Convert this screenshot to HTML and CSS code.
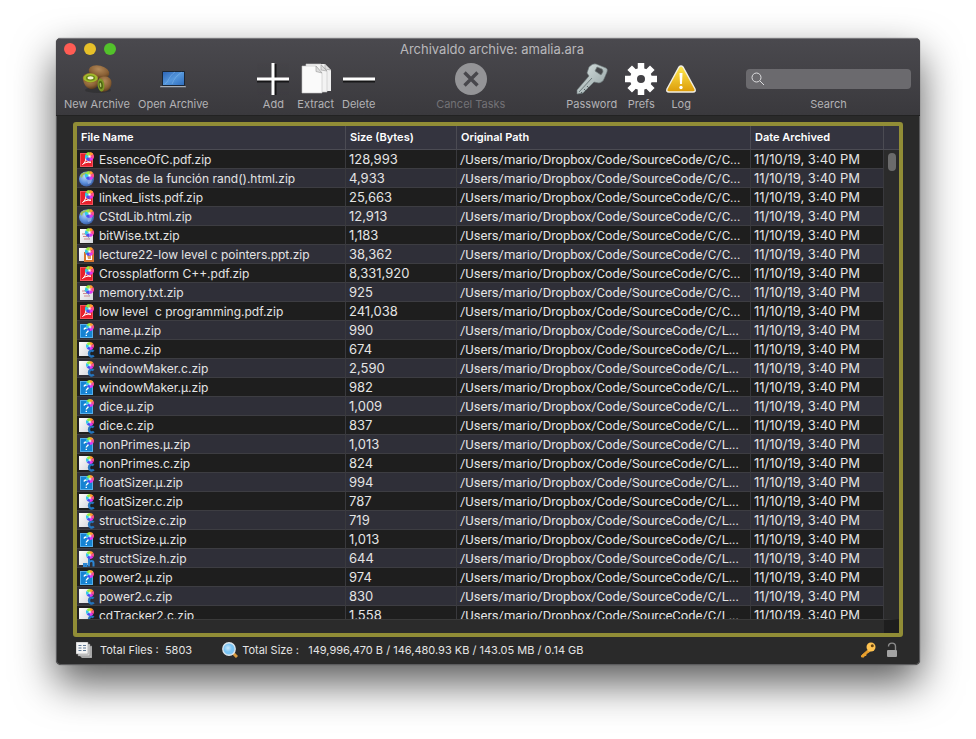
FILE: index.html
```html
<!DOCTYPE html>
<html lang="en">
<head>
  <meta charset="UTF-8" />
  <meta name="viewport" content="width=device-width, initial-scale=1.0"/>
  <title>Archivaldo archive: amalia.ara</title>
  <link rel="stylesheet" href="styles.css">
</head>
<body>

  <!-- Shared file type icons -->
  <svg class="sprites" aria-hidden="true">
    <defs>
      <linearGradient id="paper" x1="0" y1="0" x2="1" y2="1">
        <stop offset="0" stop-color="#ffffff"/><stop offset="1" stop-color="#d5d7dc"/>
      </linearGradient>
      <radialGradient id="globe" cx=".4" cy=".35" r=".7">
        <stop offset="0" stop-color="#b9d6f7"/><stop offset=".6" stop-color="#5c8fdc"/><stop offset="1" stop-color="#34569c"/>
      </radialGradient>
      <radialGradient id="shine">
        <stop offset="0" stop-color="#fff"/><stop offset="1" stop-color="#fff" stop-opacity="0"/>
      </radialGradient>
      <symbol id="wheel" viewBox="0 0 10 10">
        <path d="M5 5V0A5 5 0 0 1 9.3 2.5Z" fill="#ffa02e"/>
        <path d="M5 5 9.3 2.5A5 5 0 0 1 9.3 7.5Z" fill="#ff4f86"/>
        <path d="M5 5 9.3 7.5A5 5 0 0 1 5 10Z" fill="#e036f0"/>
        <path d="M5 5V10A5 5 0 0 1 .7 7.5Z" fill="#4c4df5"/>
        <path d="M5 5 .7 7.5A5 5 0 0 1 .7 2.5Z" fill="#2fcbe6"/>
        <path d="M5 5 .7 2.5A5 5 0 0 1 5 0Z" fill="#9bea3e"/>
        <circle cx="5" cy="5" r="2.500" fill="url(#shine)"/>
      </symbol>
      <symbol id="pdf" viewBox="0 0 16 16">
        <rect x="1" y="1" width="13" height="14" fill="#e8202c"/>
        <rect x="1.500" y="1.500" width="12" height="13" fill="none" stroke="#f2525c"/>
        <path d="M3.500 12.500C6 11 7.500 7 6.800 4.500C6.300 8 9 10.500 12 10.200C8.500 9.800 5 10.800 3.500 12.500Z" fill="none" stroke="#fff"/>
        <use href="#wheel" x="6" y="0" width="9" height="9"/>
      </symbol>
      <symbol id="html" viewBox="0 0 16 16">
        <circle cx="7.500" cy="8" r="7.500" fill="url(#globe)"/>
        <path d="M1 5C2 2 5 1 8 1L7 3 4 4 3 7Z" fill="#a5bd58"/>
        <path d="M8 9 13 8 12 12 9 13Z" fill="#86a6df"/>
        <use href="#wheel" x="6" y="0" width="9" height="9"/>
      </symbol>
      <symbol id="txt" viewBox="0 0 16 16">
        <path d="M1 1H11L14 4V15H1Z" fill="url(#paper)"/>
        <path d="M3 6H8M4 8.500H10M5 11H11" stroke="#cf8b92"/>
        <path d="M5 5 11 11" stroke="#a9aeb8"/>
        <use href="#wheel" x="6" y="0" width="9" height="9"/>
      </symbol>
      <symbol id="ppt" viewBox="0 0 16 16">
        <path d="M0 1H11V14H0Z" fill="url(#paper)"/>
        <path d="M5 5H15V15H5Z" fill="#d8762f"/>
        <path d="M7 7H13V13H7Z" fill="#fff"/>
        <path d="M8 8H12V12H9Z" fill="#e69a5e"/>
        <use href="#wheel" x="6" y="0" width="9" height="9"/>
      </symbol>
      <symbol id="mu" viewBox="0 0 16 16">
        <rect x="1" y="1" width="13" height="14" fill="#1583d2"/>
        <rect x="1.500" y="1.500" width="12" height="13" fill="none" stroke="#55aeea"/>
        <path d="M5 6.500C5.500 4.500 9.500 4.500 9.500 7C9.500 8.700 7.300 8.700 7.300 10.500M7.300 11.800V13" fill="none" stroke="#fff" stroke-width="1.400"/>
        <use href="#wheel" x="7" y="0" width="8" height="8"/>
      </symbol>
      <symbol id="c" viewBox="0 0 16 16">
        <path d="M0 0H11V14H0Z" fill="url(#paper)"/>
        <path d="M14.500 9.500C13 7.500 10 8.500 10 11.500S13 15.500 14.800 13.500" fill="none" stroke="#2474bd" stroke-width="2.400"/>
        <use href="#wheel" x="7" y="0" width="8" height="8"/>
      </symbol>
      <symbol id="h" viewBox="0 0 16 16">
        <path d="M0 0H11V14H0Z" fill="url(#paper)"/>
        <path d="M5 13H7.500V15.500H5ZM10 6V15.500M10 11.500C11 9.500 14.500 9.500 14.500 12V15.500" fill="none" stroke="#2c86d3" stroke-width="2"/>
        <use href="#wheel" x="7" y="0" width="8" height="8"/>
      </symbol>
    </defs>
  </svg>

  <main class="window">

    <!-- Title bar and toolbar -->
    <header class="header">
      <div class="titlebar">
        <div class="lights">
          <button class="light close" aria-label="Close"></button>
          <button class="light minimize" aria-label="Minimize"></button>
          <button class="light zoom" aria-label="Zoom"></button>
        </div>
        <h1>Archivaldo archive: amalia.ara</h1>
      </div>

      <div class="toolbar">
        <div class="group">
          <button class="tool">
            <svg viewBox="0 0 32 32">
              <defs>
                <radialGradient id="kiwi" cx=".45" cy=".3" r=".75"><stop offset="0" stop-color="#b38a5a"/><stop offset=".6" stop-color="#8a6035"/><stop offset="1" stop-color="#4d3116"/></radialGradient>
              </defs>
              <ellipse cx="17" cy="27" rx="13" ry="3" fill="#222" opacity=".4"/>
              <ellipse cx="18" cy="9" rx="10.500" ry="6.500" transform="rotate(14 18 9)" fill="url(#kiwi)"/>
              <path d="M2 15C2 22 7 27 12 26C17 25 18 20 17 14Z" fill="url(#kiwi)"/>
              <ellipse cx="9.500" cy="15" rx="7.800" ry="5" fill="#93632f"/>
              <ellipse cx="9.500" cy="15" rx="7.200" ry="4.400" fill="#9fb92c"/>
              <ellipse cx="9.500" cy="15" rx="4.600" ry="2.700" fill="#6c8719"/>
              <ellipse cx="9.500" cy="14.800" rx="3" ry="1.600" fill="#f3f4cf"/>
              <path d="M18 15C24 12 30 14 30.500 19C31 25 27 29 20 29Z" fill="url(#kiwi)"/>
              <ellipse cx="20" cy="22" rx="3.400" ry="6.500" transform="rotate(-8 20 22)" fill="#7c9626"/>
              <ellipse cx="19.800" cy="22" rx="2" ry="4" transform="rotate(-8 19.800 22)" fill="#4c6512"/>
              <ellipse cx="19.500" cy="22" rx=".8" ry="2.300" transform="rotate(-8 19.500 22)" fill="#b9c774"/>
            </svg>
            <span>New Archive</span>
          </button>
          <button class="tool">
            <svg viewBox="0 0 32 32">
              <defs>
                <linearGradient id="screen" x1="0" y1="0" x2="1" y2="1"><stop offset="0" stop-color="#2d66b8"/><stop offset=".5" stop-color="#5597dc"/><stop offset="1" stop-color="#2f6dbd"/></linearGradient>
              </defs>
              <rect x="5" y="8" width="23" height="15" rx="1" fill="#1b2634"/>
              <rect x="6" y="9" width="21" height="13" fill="url(#screen)"/>
              <path d="M8 21C12 18 12 13 18 9M15 21C17 16 20 12 25 9" fill="none" stroke="#85b9ee" opacity=".5"/>
              <path d="M3 23H29L28 25H4Z" fill="#a9adb4"/>
              <path d="M4 24.500H28" stroke="#565a62"/>
            </svg>
            <span>Open Archive</span>
          </button>
        </div>

        <div class="group">
          <button class="tool">
            <svg viewBox="0 0 32 32">
              <path d="M0 17.500H32M17.500 1V32" stroke="#000" stroke-width="4" opacity=".65"/>
              <path d="M0 16H32M16 0V32" stroke="#fff" stroke-width="3"/>
            </svg>
            <span>Add</span>
          </button>
          <button class="tool">
            <svg viewBox="0 0 32 32">
              <path d="M10 1H25L31 7V28H10Z" fill="#f0f0f0"/>
              <path d="M6 1H21L27 8V29H6Z" fill="#f3f3f3" stroke="#c4c4c4" stroke-width=".6"/>
              <path d="M2 3H16L22 10V30H2Z" fill="#fafafa" stroke="#c4c4c4" stroke-width=".6"/>
              <path d="M16 3V8.500L22 10ZM21 2V7L27 8ZM25 1V6L31 7Z" fill="#dedede" stroke="#999" stroke-width=".6"/>
            </svg>
            <span>Extract</span>
          </button>
          <button class="tool">
            <svg viewBox="0 0 32 32">
              <path d="M0 17.500H32" stroke="#000" stroke-width="4" opacity=".65"/>
              <path d="M0 16H32" stroke="#fff" stroke-width="3"/>
            </svg>
            <span>Delete</span>
          </button>
        </div>

        <button class="tool" disabled>
          <svg viewBox="0 0 32 32">
            <circle cx="16" cy="16" r="16" fill="#949497"/>
            <path d="M9.500 9.500 22.500 22.500M22.500 9.500 9.500 22.500" stroke="#48474c" stroke-width="3.400"/>
          </svg>
          <span>Cancel Tasks</span>
        </button>

        <div class="group">
          <button class="tool">
            <svg viewBox="0 0 32 32">
              <defs>
                <linearGradient id="steel" x1="0" y1="0" x2="1" y2="1"><stop offset="0" stop-color="#dce5e4"/><stop offset="1" stop-color="#8e9d9e"/></linearGradient>
              </defs>
              <path d="M20 1 30 5Q32 6 31 9L28 16Q27 19 23 20L18 19 7 30 1 31V27L13 13 11 10 13 4Q17 0 20 1Z" fill="url(#steel)" stroke="#6b7778" stroke-width=".6"/>
              <path d="M3 29 16 15" stroke="#6d7b7c"/>
              <path d="M8 26 10 28M11 23 13 25M5 29 7 31" stroke="#536061"/>
              <path d="M21 4 26 6Q27 7 27 9L25 12 19 8Z" fill="#46484b" stroke="#75807f" stroke-width=".7"/>
            </svg>
            <span>Password</span>
          </button>
          <button class="tool">
            <svg viewBox="0 0 32 32">
              <g stroke="#fff" stroke-width="6.500">
                <path d="M16 0V10M16 22V32M0 16H10M22 16H32"/>
                <path d="M4.700 4.700 12 12M20 20 27.300 27.300M27.300 4.700 20 12M12 20 4.700 27.300"/>
              </g>
              <circle cx="16" cy="16" r="7.500" fill="none" stroke="#fff" stroke-width="7"/>
            </svg>
            <span>Prefs</span>
          </button>
          <button class="tool">
            <svg viewBox="0 0 32 32">
              <defs>
                <linearGradient id="warn" x1="0" y1="0" x2="0" y2="1"><stop offset="0" stop-color="#ffea50"/><stop offset="1" stop-color="#dc9b08"/></linearGradient>
              </defs>
              <path d="M14 4Q16 2 18 4L30 26Q31 29 28 29H4Q1 29 2 26Z" fill="url(#warn)" stroke="#f1eee3" stroke-width="1.400"/>
              <path d="M14.500 10H17.500L17 21H15Z" fill="#fff"/>
              <circle cx="16" cy="24.500" r="1.700" fill="#fff"/>
            </svg>
            <span>Log</span>
          </button>
        </div>

        <div class="search">
          <div class="search-field">
            <svg viewBox="0 0 14 14"><circle cx="5.500" cy="5.500" r="4.500"/><path d="M9 9 13 13"/></svg>
            <input type="search" id="search">
          </div>
          <label for="search">Search</label>
        </div>
      </div>
    </header>

    <!-- Archive contents -->
    <section class="frame">
      <div class="list">
        <table>
          <colgroup>
            <col class="col-name">
            <col class="col-size">
            <col>
            <col class="col-date">
            <col class="col-scroll">
          </colgroup>
          <thead>
            <tr>
              <th>File Name</th>
              <th>Size (Bytes)</th>
              <th>Original Path</th>
              <th>Date Archived</th>
              <th class="corner"></th>
            </tr>
          </thead>
          <tbody id="files"></tbody>
        </table>
      </div>
      <div class="hscroll"></div>
    </section>

    <!-- Status bar -->
    <footer>
      <svg class="status-icon" viewBox="0 0 16 16">
        <path d="M4 4H16V16H6L4 14Z" fill="#b9b9b9" stroke="#777" stroke-width=".5"/>
        <path d="M2 2H14V14H2Z" fill="#d0d0d0" stroke="#777" stroke-width=".5"/>
        <path d="M0 0H12V12H0Z" fill="#f4f4f4" stroke="#888" stroke-width=".5"/>
        <path d="M2.500 3.500H5.500M7 3.500H10M2.500 6H5.500M7 6H10M2.500 8.500H5.500M7 8.500H10" stroke="#5e7894" stroke-width="1.200"/>
      </svg>
      <span class="total-files">Total Files : &nbsp;5803</span>
      <svg class="status-icon" viewBox="0 0 16 16">
        <path d="M11 11 15 15" stroke="#d99b3f" stroke-width="3"/>
        <circle cx="7" cy="7" r="6.200" fill="#79c3f3" stroke="#d9e4ec" stroke-width="1.400"/>
        <circle cx="6" cy="6" r="4" fill="url(#shine)" opacity=".6"/>
      </svg>
      <span class="total-size">Total Size : &nbsp;&nbsp;149,996,470 B / 146,480.93 KB / 143.05 MB / 0.14 GB</span>
      <svg class="status-icon" viewBox="0 0 16 16">
        <path d="M9 7 1.500 13.500V15H4V13.500H6V12L10.500 9" fill="#e9a02d" stroke="#e9a02d"/>
        <circle cx="11" cy="5" r="4.500" fill="#ffc351"/>
        <circle cx="12.300" cy="3.800" r="1.500" fill="#674410"/>
      </svg>
      <svg class="status-icon" viewBox="0 0 16 16">
        <path d="M4.500 4.500C4.500 0 11.500 0 11.500 4.500V8" fill="none" stroke="#8b8b8b" stroke-width="1.400"/>
        <rect x="3" y="8" width="10" height="7" rx="1" fill="#a3a3a3"/>
      </svg>
    </footer>
  </main>

  <script>
    const files = [
      ['pdf', 'EssenceOfC.pdf.zip', '128,993'],
      ['html', 'Notas de la función rand().html.zip', '4,933'],
      ['pdf', 'linked_lists.pdf.zip', '25,663'],
      ['html', 'CStdLib.html.zip', '12,913'],
      ['txt', 'bitWise.txt.zip', '1,183'],
      ['ppt', 'lecture22-low level c pointers.ppt.zip', '38,362'],
      ['pdf', 'Crossplatform C++.pdf.zip', '8,331,920'],
      ['txt', 'memory.txt.zip', '925'],
      ['pdf', 'low level  c programming.pdf.zip', '241,038'],
      ['mu', 'name.µ.zip', '990'],
      ['c', 'name.c.zip', '674'],
      ['c', 'windowMaker.c.zip', '2,590'],
      ['mu', 'windowMaker.µ.zip', '982'],
      ['mu', 'dice.µ.zip', '1,009'],
      ['c', 'dice.c.zip', '837'],
      ['mu', 'nonPrimes.µ.zip', '1,013'],
      ['c', 'nonPrimes.c.zip', '824'],
      ['mu', 'floatSizer.µ.zip', '994'],
      ['c', 'floatSizer.c.zip', '787'],
      ['c', 'structSize.c.zip', '719'],
      ['mu', 'structSize.µ.zip', '1,013'],
      ['h', 'structSize.h.zip', '644'],
      ['mu', 'power2.µ.zip', '974'],
      ['c', 'power2.c.zip', '830'],
      ['c', 'cdTracker2.c.zip', '1,558']
    ];

    const base = '/Users/mario/Dropbox/Code/SourceCode/C/';

    document.getElementById('files').innerHTML = files.map(function (file, i) {
      // The first nine files sit in the C/C folder, the others in C/L
      const path = base + (i < 9 ? 'C...' : 'L...');
      const scrollbar = i === 0
        ? `<td class="scrollbar" rowspan="${files.length}"><div class="thumb"></div></td>`
        : '';
      return `<tr>
        <td><div class="file"><svg><use href="#${file[0]}"/></svg>${file[1]}</div></td>
        <td class="number">${file[2]}</td>
        <td class="path">${path}</td>
        <td class="number">11/10/19, 3:40 PM</td>
        ${scrollbar}
      </tr>`;
    }).join('');
  </script>

</body>
</html>
```
FILE: styles.css
```css
* {
  box-sizing: border-box;
}

body {
  margin: 0;
  height: 100vh;
  padding: 38px 56px 74px;
  background: #fff;
  font-family: Inter, "Liberation Sans", sans-serif;
  font-size: 12px;
  color: #e4e4e4;
}

button {
  border: none;
  padding: 0;
  background: none;
  font: inherit;
  color: inherit;
}

.sprites {
  display: block;
  width: 0;
  height: 0;
}

.window {
  display: flex;
  flex-direction: column;
  height: 100%;
  background: #2a2a2a;
  border-radius: 5px;
  overflow: hidden;
  box-shadow: inset 0 0 0 1px #5c5c5e, 0 0 1px #333, 0 18px 42px rgba(0, 0, 0, 0.65);
}

/* Title bar and toolbar */
.header {
  height: 78px;
  background: linear-gradient(#4a494e, #3a393d);
  border-top: 1px solid #77767a;
  border-bottom: 1px solid #222;
}

.titlebar {
  display: grid;
  grid-template-columns: 1fr auto 1fr;
  align-items: center;
  height: 20px;
  padding-left: 8px;
}

.lights {
  display: flex;
  gap: 8px;
}

.light {
  width: 12px;
  height: 12px;
  border-radius: 50%;
}

.close {
  background: #ff5c54;
}

.minimize {
  background: #e6c029;
}

.zoom {
  background: #53c22b;
}

h1 {
  margin: 0;
  font-size: 13px;
  font-weight: 400;
  color: #b9b8bb;
}

.toolbar {
  display: flex;
  justify-content: space-between;
  padding: 4px 9px 0 8px;
  font-size: 11px;
  line-height: 16px;
  color: #b3b2b5;
}

.group {
  display: flex;
  gap: 8px;
}

.tool {
  display: flex;
  flex-direction: column;
  align-items: center;
  gap: 1px;
  min-width: 32px;
}

.tool svg {
  width: 32px;
  height: 32px;
}

.tool:disabled {
  margin: 0 12px;
  color: #737276;
}

.search {
  display: flex;
  flex-direction: column;
  align-items: center;
  width: 165px;
  gap: 7px;
  padding-top: 6px;
}

.search-field {
  display: flex;
  align-items: center;
  width: 100%;
  height: 20px;
  padding-left: 5px;
  border-radius: 4px;
  background: #6b6a6e;
}

.search-field svg {
  width: 14px;
  height: 14px;
  fill: none;
  stroke: #dddddf;
}

.search-field input {
  flex: 1;
  min-width: 0;
  border: none;
  outline: none;
  background: none;
  color: #fff;
}

/* File list */
.frame {
  flex: 1;
  min-height: 0;
  display: flex;
  flex-direction: column;
  margin: 6px 17px 0;
  border: 4px solid #918d36;
  border-radius: 3px;
}

.list {
  flex: 1;
  min-height: 0;
  overflow: hidden;
}

table {
  width: 100%;
  table-layout: fixed;
  border-collapse: separate;
  border-spacing: 0;
}

.col-name {
  width: 269px;
}

.col-size {
  width: 111px;
}

.col-date {
  width: 133px;
}

.col-scroll {
  width: 15px;
}

th {
  height: 24px;
  padding: 0 4px 2px;
  background: #34343f;
  border-bottom: 1px solid #4b4b53;
  border-right: 1px solid #4b4b53;
  text-align: left;
  font-size: 11px;
  font-weight: 600;
  color: #fff;
}

td {
  height: 19px;
  padding: 1px 3px 0;
  border-right: 1px solid #39393d;
  border-bottom: 1px solid #3d3d42;
  line-height: 17px;
  white-space: pre;
  overflow: hidden;
}

tbody tr {
  background: #1e1e1e;
}

tbody tr:nth-child(even) {
  background: #2f2f38;
}

td:first-child {
  padding: 1px 2px 0;
}

.file {
  display: flex;
  align-items: center;
  height: 17px;
  gap: 4px;
}

.file svg {
  width: 16px;
  height: 16px;
}

.number {
  font-size: 13px;
}

.path {
  font-family: Roboto, "Liberation Sans", sans-serif;
  font-size: 13px;
}

.corner {
  border-right: none;
}

.scrollbar {
  padding: 3px 4px;
  background: #2b2b2b;
  border: none;
  vertical-align: top;
}

.thumb {
  width: 8px;
  height: 18px;
  border-radius: 4px;
  background: #6b6b6b;
}

.hscroll {
  height: 14px;
  background: #2b2b2b;
  border-top: 1px solid #3a3a3a;
  border-right: 15px solid #1e1e1e;
}

/* Status bar */
footer {
  display: flex;
  align-items: center;
  height: 28px;
  padding: 0 20px 2px;
  font-size: 11px;
}

.status-icon {
  width: 16px;
  height: 16px;
}

.total-files {
  margin: 0 30px 0 8px;
}

.total-size {
  flex: 1;
  margin-left: 4px;
}

footer .status-icon:last-child {
  margin-left: 8px;
}
```
